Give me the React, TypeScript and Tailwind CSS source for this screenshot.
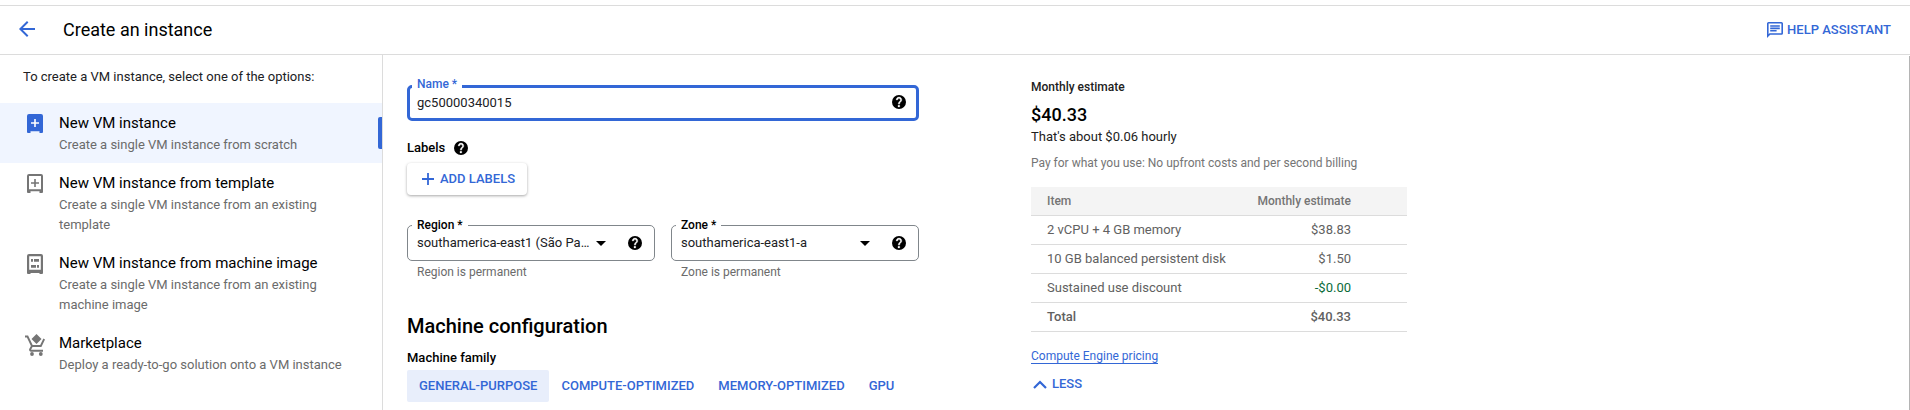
import React from "react";

function HelpIcon({ className = "" }: { className?: string }) {
  return (
    <svg viewBox="2 2 20 20" className={`h-[14px] w-[14px] shrink-0 fill-black ${className}`}>
      <circle cx="12" cy="12" r="10" />
      <path
        fill="#fff"
        stroke="#fff"
        strokeWidth=".5"
        d="M13 19h-2.400v-2.300H13zm2.070-7.750-.9.920C13.450 12.900 13 13.500 13 15h-2v-.5c0-1.100.450-2.100 1.170-2.830l1.240-1.260c.370-.360.590-.860.590-1.410 0-1.100-.9-2-2-2s-2 .9-2 2H8c0-2.210 1.790-4 4-4s4 1.790 4 4c0 .880-.360 1.680-.930 2.250z"
      />
    </svg>
  );
}

function VmIcon() {
  return (
    <svg viewBox="0 0 16 19" className="h-[19px] w-4">
      <path fill="#3367d6" d="M2 0h12a2 2 0 0 1 2 2v16.500h-.5a.5.5 0 0 1-.5.5h-2.500v-1.700h-9V19H1a1 1 0 0 1-1-1V2a2 2 0 0 1 2-2z" />
      <path fill="#fff" d="M7.200 5h1.600v3.200H12v1.600H8.800V13H7.200V9.800H4V8.200h3.200z" />
    </svg>
  );
}

function TemplateIcon() {
  return (
    <svg viewBox="0 0 16 19" className="h-[19px] w-4">
      <path
        fill="#757575"
        fillRule="evenodd"
        d="M2 0h12a2 2 0 0 1 2 2v16a1 1 0 0 1-1 1h-2.500v-1.700h-9V19H1a1 1 0 0 1-1-1V2a2 2 0 0 1 2-2zM2 2v13.300h12V2z"
      />
      <path fill="#757575" d="M7.200 5h1.600v3.200H12v1.600H8.800V13H7.200V9.800H4V8.200h3.200z" />
    </svg>
  );
}

function MachineImageIcon() {
  return (
    <svg viewBox="0 0 16 20" className="h-5 w-4">
      <path
        fill="#757575"
        fillRule="evenodd"
        d="M2 0h12a2 2 0 0 1 2 2v17a1 1 0 0 1-1 1h-2.500v-1h-9v1H1a1 1 0 0 1-1-1V2a2 2 0 0 1 2-2zM2.200 2.200v13.600h11.600V2.200z"
      />
      <path fill="#757575" d="M4 5h2v2.800H4zM7 5h5v2.800H7zM4 11h5v2.800H4zM10 11h2v2.800h-2z" />
    </svg>
  );
}

function MarketIcon() {
  return (
    <svg viewBox="0 0 20 22" className="h-[22px] w-5">
      <path fill="#757575" d="M11.500 0 16.500 5l-5 5-5-5z" />
      <path
        fill="none"
        stroke="#757575"
        strokeWidth="1.900"
        d="M0 2.500h2.500L7 12h8.800l3.400-7M7 12l-1.800 3.200c-.4.900 0 1.500.9 1.500H18"
      />
      <circle cx="7" cy="20" r="1.900" fill="#757575" />
      <circle cx="15.800" cy="20" r="1.900" fill="#757575" />
    </svg>
  );
}

type Option = { title: string; text: string; icon: React.ReactNode; selected?: boolean };

const OPTIONS: Option[] = [
  { title: "New VM instance", text: "Create a single VM instance from scratch", icon: <VmIcon />, selected: true },
  { title: "New VM instance from template", text: "Create a single VM instance from an existing template", icon: <TemplateIcon /> },
  { title: "New VM instance from machine image", text: "Create a single VM instance from an existing machine image", icon: <MachineImageIcon /> },
  { title: "Marketplace", text: "Deploy a ready-to-go solution onto a VM instance", icon: <MarketIcon /> },
];

function OptionRow({ title, text, icon, selected }: Option) {
  return (
    <div className={`flex pt-[10px] pb-2 ${selected ? "bg-[#f0f5ff]" : ""}`}>
      <div className="flex h-[22px] w-[59px] shrink-0 justify-center pt-px pl-[11px]">{icon}</div>
      <div className="w-[300px]">
        <div className="text-[15px] leading-5">{title}</div>
        <div className="mt-[2px] text-[13px] leading-5 text-[#6b6b6b]">{text}</div>
      </div>
      {selected && <div className="mt-1 ml-auto h-8 w-1 rounded-l-[2px] bg-[#3367d6]" />}
    </div>
  );
}

function SelectField({ label, value, hint }: { label: string; value: string; hint: string }) {
  return (
    <div className="w-[248px]">
      <div className="relative flex h-9 items-center rounded-[5px] border border-[#80868b] pr-3 pl-[9px]">
        <span className="absolute -top-[7px] left-1 bg-white px-[5px] text-xs leading-3 font-medium">{label}</span>
        <span className="text-[13px] leading-5 whitespace-nowrap text-[#202124]">{value}</span>
        <svg viewBox="0 0 10 5" className="ml-auto h-[5px] w-[10px] shrink-0">
          <path d="M0 0h10L5 5z" />
        </svg>
        <HelpIcon className="ml-[22px]" />
      </div>
      <div className="mt-[3px] pl-[10px] text-xs leading-4 text-[#6b6b6b]">{hint}</div>
    </div>
  );
}

const FAMILIES = ["GENERAL-PURPOSE", "COMPUTE-OPTIMIZED", "MEMORY-OPTIMIZED", "GPU"];

const COSTS = [
  { item: "2 vCPU + 4 GB memory", cost: "$38.83", tone: "" },
  { item: "10 GB balanced persistent disk", cost: "$1.50", tone: "" },
  { item: "Sustained use discount", cost: "-$0.00", tone: "text-[#0b6b3a]" },
];

export default function App() {
  return (
    <div className="flex h-[410px] w-[1910px] flex-col overflow-hidden bg-white pt-[5px] font-['Roboto',sans-serif] text-black">
      <header className="flex h-[50px] shrink-0 items-center border-y border-[#dcdcdc] pr-[19px] pl-[19px]">
        <svg viewBox="4 4 16 16" className="-mt-[2px] h-4 w-4 fill-[#3367d6]">
          <path d="M20 11H7.830l5.590-5.590L12 4l-8 8 8 8 1.410-1.410L7.830 13H20v-2z" />
        </svg>
        <h1 className="ml-7 text-lg leading-6">Create an instance</h1>
        <div className="ml-auto flex items-center text-[13px] font-medium text-[#3367d6]">
          <svg viewBox="2 2 20 20" className="mr-1 h-4 w-4 fill-[#3367d6]">
            <path d="M4 4h16v12H5.170L4 17.170V4m0-2c-1.100 0-1.990.9-1.990 2L2 22l4-4h14c1.100 0 2-.9 2-2V4c0-1.100-.9-2-2-2H4zm2 10h8v2H6v-2zm0-3h12v2H6V9zm0-3h12v2H6V6z" />
          </svg>
          HELP ASSISTANT
        </div>
      </header>
      <div className="flex min-h-0 flex-1">
        <aside className="w-[383px] shrink-0 border-r border-[#dcdcdc]">
          <div className="pt-3 pb-4 pl-[23px] text-[13px] leading-5 text-[#202124]">To create a VM instance, select one of the options:</div>
          {OPTIONS.map((o) => (
            <OptionRow key={o.title} {...o} />
          ))}
        </aside>

        <main className="ml-6 w-[512px] shrink-0 pt-[30px]">
          <div className="relative flex h-9 items-center rounded-[5px] border-3 border-[#3367d6] pr-[10px] pl-[7px]">
            <span className="absolute -top-[10px] left-[2px] bg-white px-[5px] text-xs leading-3 font-medium text-[#3367d6]">Name *</span>
            <span className="text-[13px] leading-5 text-[#202124]">gc50000340015</span>
            <HelpIcon className="-mt-[2px] ml-auto" />
          </div>
          <div className="mt-[17px] flex h-5 items-center text-[13px] font-medium">
            Labels
            <HelpIcon className="ml-[9px]" />
          </div>
          <button className="mt-[5px] flex h-8 w-[120px] items-center rounded-[4px] pl-[15px] text-[13px] font-medium text-[#3367d6] shadow-[0_1px_3px_rgba(0,0,0,0.35)]">
            <svg viewBox="0 0 12 12" className="mr-[6px] h-3 w-3 fill-[#3367d6]">
              <path d="M5.100 0h1.800v5.100H12v1.800H6.900V12H5.100V6.900H0V5.100h5.100z" />
            </svg>
            ADD LABELS
          </button>
          <div className="mt-[30px] flex gap-4">
            <SelectField label="Region *" value="southamerica-east1 (São Pa…" hint="Region is permanent" />
            <SelectField label="Zone *" value="southamerica-east1-a" hint="Zone is permanent" />
          </div>
          <h2 className="mt-[34px] text-xl leading-6 font-medium">Machine configuration</h2>
          <div className="mt-[10px] text-[13px] leading-5 font-medium">Machine family</div>
          <div className="mt-[2px] flex h-8">
            {FAMILIES.map((f, i) => (
              <div
                key={f}
                className={`flex items-center rounded-[2px] px-3 text-[13px] font-medium whitespace-nowrap text-[#3367d6] ${i === 0 ? "bg-[#e8eefb]" : ""}`}
              >
                {f}
              </div>
            ))}
          </div>
        </main>

        <section className="ml-28 w-[376px] shrink-0 pt-6">
          <div className="text-xs leading-4 font-medium text-[#212121]">Monthly estimate</div>
          <div className="mt-2 text-lg leading-6 font-medium">$40.33</div>
          <div className="text-[13px] leading-5 text-[#212121]">That's about $0.06 hourly</div>
          <div className="mt-2 text-xs leading-4 text-[#757575]">Pay for what you use: No upfront costs and per second billing</div>
          <div className="mt-4">
            <div className="flex h-[29px] items-center justify-between border-b border-[#dcdcdc] bg-[#f4f4f4] pr-14 pl-4 text-xs font-medium text-[#757575]">
              <span>Item</span>
              <span>Monthly estimate</span>
            </div>
            {COSTS.map((c) => (
              <div key={c.item} className="flex h-[29px] items-center justify-between border-b border-[#dcdcdc] pr-14 pl-4 text-[13px] text-[#616161]">
                <span>{c.item}</span>
                <span className={c.tone}>{c.cost}</span>
              </div>
            ))}
            <div className="flex h-[29px] items-center justify-between border-b border-[#dcdcdc] pr-14 pl-4 text-[13px] font-medium text-[#616161]">
              <span>Total</span>
              <span>$40.33</span>
            </div>
          </div>
          <div className="mt-[17px] flex">
            <a className="border-b border-[#3367d6] text-xs leading-[14px] text-[#3367d6]">Compute Engine pricing</a>
          </div>
          <div className="mt-[10px] flex h-5 items-center pl-[2px] text-[13px] font-medium text-[#3367d6]">
            <svg viewBox="0 0 14 9" className="mr-[5px] h-[9px] w-[14px]">
              <path d="M1 8l6-6 6 6" fill="none" stroke="#3367d6" strokeWidth="2.200" />
            </svg>
            LESS
          </div>
        </section>
        <div className="mt-[1px] ml-auto w-px bg-[#b4b4b4]" />
      </div>
    </div>
  );
}
